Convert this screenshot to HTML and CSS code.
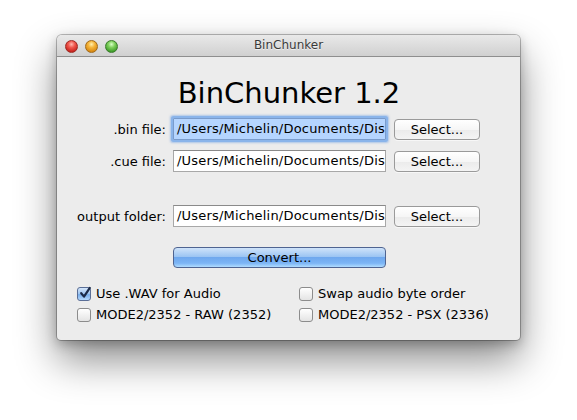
FILE: index.html
```html
<!DOCTYPE html>
<html>
<head>
<meta charset="utf-8">
<link rel="stylesheet" href="styles.css">
</head>
<body>
<div class="window">
  <div class="titlebar">
    <div class="lights">
      <span class="light red"></span>
      <span class="light yellow"></span>
      <span class="light green"></span>
    </div>
    <div class="title">BinChunker</div>
  </div>
  <div class="content">
    <h1 class="heading">BinChunker 1.2</h1>
    <div class="row">
      <label class="lbl">.bin file:</label>
      <div class="field focused"><span class="sel">/Users/Michelin/Documents/Dis</span></div>
      <button class="btn">Select...</button>
    </div>
    <div class="row r2">
      <label class="lbl">.cue file:</label>
      <div class="field">/Users/Michelin/Documents/Dis</div>
      <button class="btn">Select...</button>
    </div>
    <div class="row r3">
      <label class="lbl">output folder:</label>
      <div class="field">/Users/Michelin/Documents/Disk</div>
      <button class="btn">Select...</button>
    </div>
    <div class="row r4">
      <span class="lbl"></span>
      <div class="convert">Convert...</div>
    </div>
    <div class="checks">
      <div class="check"><span class="box checked"><svg width="14" height="14" viewBox="0 0 14 14"><path d="M3.2 7.2 L6 10.6 L11.8 1.8" fill="none" stroke="#1b2a48" stroke-width="2.2" stroke-linecap="round" stroke-linejoin="round"/></svg></span>Use .WAV for Audio</div>
      <div class="check"><span class="box"></span>Swap audio byte order</div>
      <div class="check"><span class="box"></span>MODE2/2352 - RAW (2352)</div>
      <div class="check"><span class="box"></span>MODE2/2352 - PSX (2336)</div>
    </div>
  </div>
</div>
</body>
</html>
```
FILE: styles.css
```css
html, body {
  margin: 0;
  padding: 0;
  background: #ffffff;
}
body {
  width: 577px;
  height: 420px;
  overflow: hidden;
  padding: 35px 0 0 57px;
  box-sizing: border-box;
  font-family: "DejaVu Sans", "Liberation Sans", sans-serif;
  font-size: 13px;
  color: #000;
}
.window {
  width: 463px;
  height: 305px;
  background: #ececec;
  border-radius: 5px 5px 4px 4px;
  box-shadow: 0 20px 40px rgba(0,0,0,0.45), 0 0 0 1px rgba(0,0,0,0.25), 0 4px 12px rgba(0,0,0,0.25);
  overflow: hidden;
  display: flex;
  flex-direction: column;
}
.titlebar {
  height: 21px;
  flex: none;
  position: relative;
  background: linear-gradient(#e9e9e9, #d0d0d0);
  border-bottom: 1px solid #8e8e8e;
  display: flex;
  align-items: center;
}
.lights {
  display: flex;
  gap: 7px;
  padding-left: 8px;
  padding-top: 1px;
}
.light {
  width: 13px;
  height: 13px;
  border-radius: 50%;
  box-sizing: border-box;
}
.red {
  background: radial-gradient(circle at 50% 30%, #ffb8b0 0, #f0584e 35%, #c5211b 80%);
  border: 1px solid #9c2a24;
}
.yellow {
  background: radial-gradient(circle at 50% 30%, #fff0b0 0, #f5b53a 35%, #d68610 80%);
  border: 1px solid #a06a1a;
}
.green {
  background: radial-gradient(circle at 50% 30%, #d8ffc8 0, #7ed05c 35%, #3c9a28 80%);
  border: 1px solid #3a7a2c;
}
.title {
  position: absolute;
  left: 0;
  right: 0;
  top: 3px;
  text-align: center;
  font-size: 12px;
  color: #3a3a3a;
  text-shadow: 0 1px 0 rgba(255,255,255,0.6);
}
.content {
  flex: 1;
  display: flex;
  flex-direction: column;
}
.heading {
  margin: 18px 0 0 0;
  font-weight: normal;
  font-size: 29px;
  line-height: 36px;
  text-align: center;
  padding-left: 1px;
  color: #000;
}
.row {
  display: flex;
  align-items: center;
  height: 22px;
  margin-top: 7px;
}
.r2 { margin-top: 10px; }
.r3 { margin-top: 33px; }
.r4 { margin-top: 20px; height: 21px; }
.lbl {
  width: 109px;
  flex: none;
  text-align: right;
  margin-right: 7px;
  color: #000;
}
.field {
  width: 213px;
  flex: none;
  height: 22px;
  box-sizing: border-box;
  background: #fff;
  border: 1px solid #a8a8a8;
  border-top-color: #8a8a8a;
  padding: 0 0 0 3px;
  line-height: 20px;
  letter-spacing: 0.2px;
  white-space: nowrap;
  overflow: hidden;
  color: #000;
}
.field.focused {
  box-shadow: 0 0 0 2px #8ab4ea, 0 0 2px 3px rgba(110,160,230,0.5);
  border-color: #7a9ccc;
  border-radius: 1px;
}
.sel {
  background: #b5d5ff;
  display: inline-block;
  padding: 0 3px;
  margin-left: -3px;
}
.btn {
  width: 86px;
  flex: none;
  margin-left: 8px;
  height: 21px;
  font-family: inherit;
  font-size: 13px;
  color: #000;
  padding: 0;
  border: 1px solid #9a9a9a;
  border-radius: 4px;
  background: linear-gradient(#ffffff 0%, #f6f6f6 50%, #ebebeb 51%, #f4f4f4 100%);
  box-shadow: 0 1px 0 rgba(255,255,255,0.6);
}
.convert {
  width: 213px;
  flex: none;
  height: 21px;
  box-sizing: border-box;
  border: 1px solid #4f6491;
  border-radius: 4px;
  background: linear-gradient(#cfe3fa 0%, #9cc5f3 45%, #6fa8ee 50%, #7cb5f5 80%, #b0dcff 100%);
  text-align: center;
  line-height: 19px;
  color: #000;
}
.checks {
  display: grid;
  grid-template-columns: 222px 200px;
  grid-auto-rows: 21px;
  margin-top: 15px;
  padding-left: 20px;
  align-items: center;
}
.check {
  display: flex;
  align-items: center;
  gap: 5px;
  white-space: nowrap;
}
.box {
  width: 14px;
  height: 14px;
  box-sizing: border-box;
  border: 1px solid #8c8c8c;
  border-radius: 3px;
  background: linear-gradient(#ffffff, #e4e4e4);
  display: inline-flex;
  position: relative;
  flex: none;
}
.box.checked {
  border-color: #5a6e96;
  background: linear-gradient(#d4e6fb 0%, #9cc3ef 50%, #78aeeb 55%, #b4d8fc 100%);
}
.box svg {
  position: absolute;
  left: 0;
  top: -2px;
}
```
